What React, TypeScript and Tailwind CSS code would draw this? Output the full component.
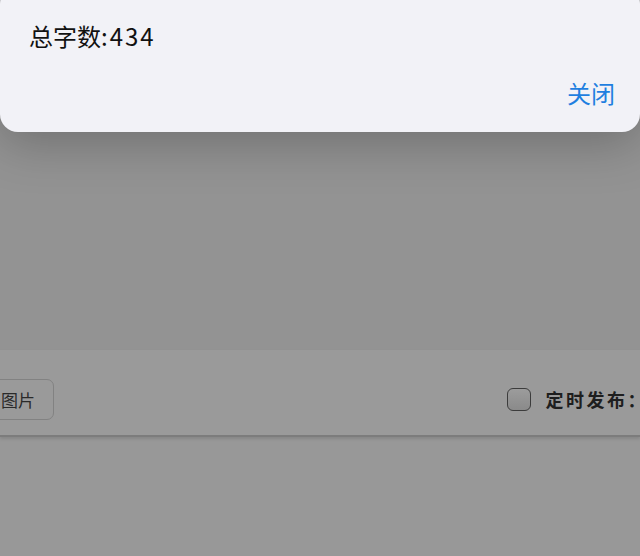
import React from 'react';

const cjk = "font-['Noto_Sans_CJK_SC','Noto_Sans',sans-serif]";

export default function App() {
  return (
    <div className={`relative w-[640px] h-[556px] overflow-hidden bg-[#989898] ${cjk}`}>
      {/* page under the overlay */}
      <div className="flex flex-col h-full">
        <div className="h-[350px] bg-[#939393]" />
        <div className="h-[87px] bg-[#9a9a9a] flex items-center justify-between pt-[14px] border-b-2 border-[#7c7c7c] shadow-[0_2px_3px_rgba(0,0,0,0.12)]">
          <button className="-ml-[30px] h-[41px] w-[84px] pl-[30px] flex items-center rounded-[7px] border border-[#828282] text-[17px] text-[#2a2a2a] bg-[#9a9a9a]">
            图片
          </button>
          <div className="flex items-center -mr-[8px]">
            <span className="w-[24px] h-[23px] rounded-[6px] border-[1.5px] border-[#3c3c3c] bg-gradient-to-b from-[#9c9c9c] to-[#8a8a8a]" />
            <span className="ml-[15px] text-[18px] font-bold text-[#1e1e1e] whitespace-nowrap tracking-[2.5px]">定时发布：</span>
          </div>
        </div>
        <div className="flex-1" />
      </div>

      {/* dialog */}
      <div className="absolute left-0 right-0 -top-[14px] h-[146px] bg-[#f2f2f7] rounded-[18px] shadow-[0_10px_50px_rgba(0,0,0,0.25)] pl-[29px] pr-[25px] pt-[35px] flex flex-col">
        <div className="text-[24px] leading-[30px] text-[#111]">
          总字数<span className="tracking-[2px]">:434</span>
        </div>
        <div className="flex justify-end mt-[27px]">
          <span className="text-[24px] leading-[30px] text-[#1f7fe0]">关闭</span>
        </div>
      </div>
    </div>
  );
}
